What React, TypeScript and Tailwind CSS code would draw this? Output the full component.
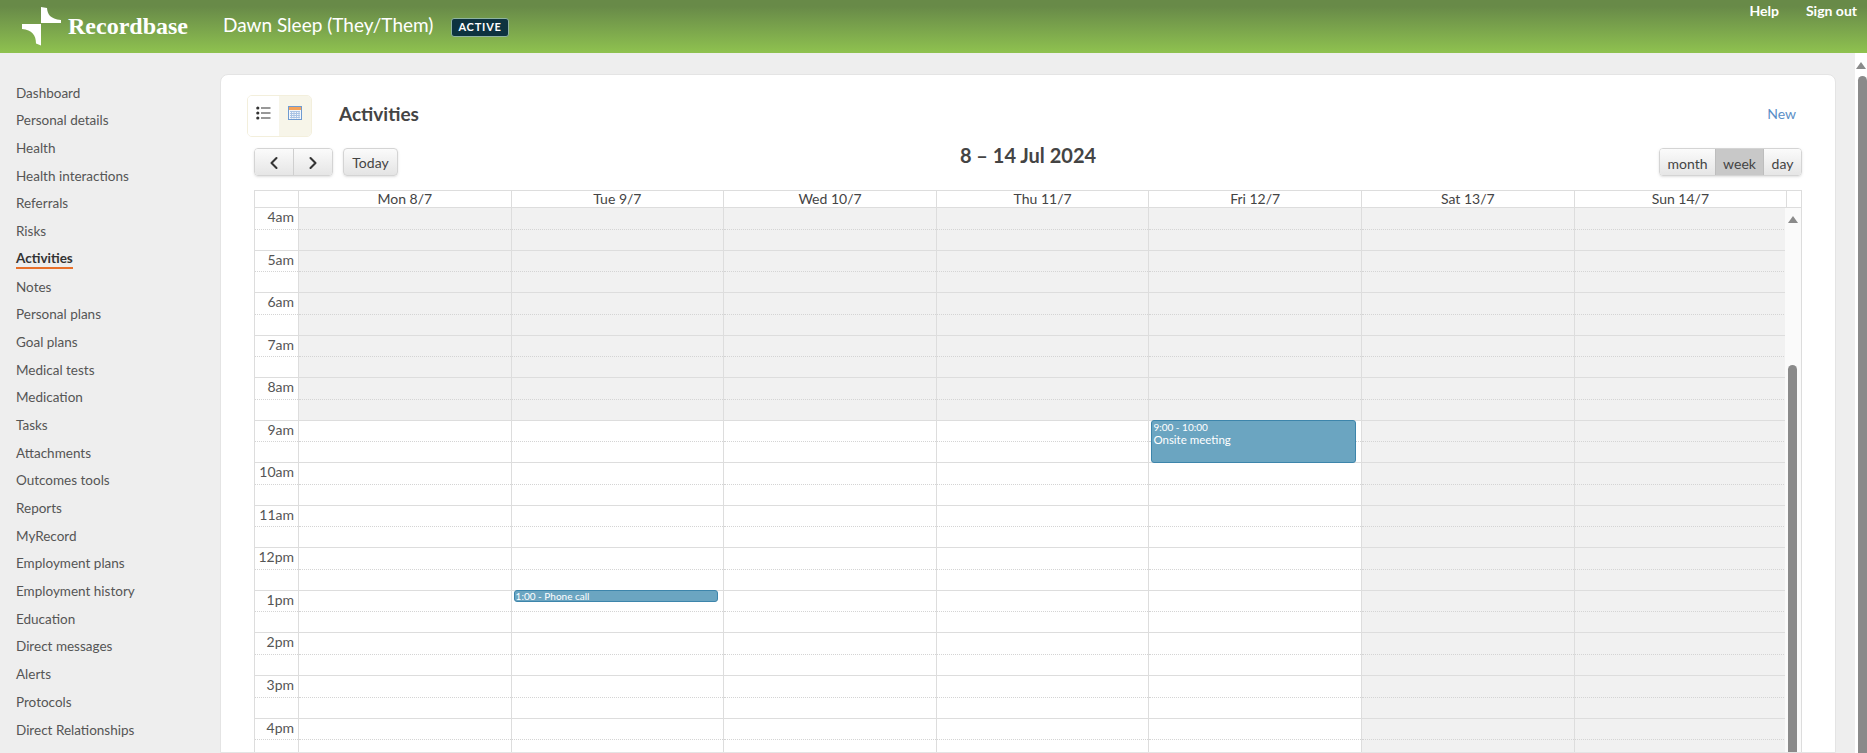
import React from 'react';
import { ChevronLeft, ChevronRight } from 'lucide-react';

const NAV_ITEMS = [
  'Dashboard', 'Personal details', 'Health', 'Health interactions', 'Referrals', 'Risks',
  'Activities', 'Notes', 'Personal plans', 'Goal plans', 'Medical tests', 'Medication',
  'Tasks', 'Attachments', 'Outcomes tools', 'Reports', 'MyRecord', 'Employment plans',
  'Employment history', 'Education', 'Direct messages', 'Alerts', 'Protocols', 'Direct Relationships',
];

const DAYS = ['Mon 8/7', 'Tue 9/7', 'Wed 10/7', 'Thu 11/7', 'Fri 12/7', 'Sat 13/7', 'Sun 14/7'];
const HOURS = ['4am', '5am', '6am', '7am', '8am', '9am', '10am', '11am', '12pm', '1pm', '2pm', '3pm', '4pm'];

const Logo = () => (
  <svg width="39" height="39" viewBox="0 0 39 39" className="shrink-0" fill="#fff">
    <path d="M19 0 L25 1 C25.500 7 28 12 39 13 L39 16 L19 16 Z" />
    <path d="M0 17 L19 17 L19 38.500 L14 36.500 C14 28 10 23 0 22 Z" />
  </svg>
);

const ListIcon = () => (
  <svg width="15" height="14" viewBox="0 0 15 14" fill="#333">
    <circle cx="1.800" cy="2" r="1.600" />
    <circle cx="1.800" cy="7" r="1.600" />
    <circle cx="1.800" cy="12" r="1.600" />
    <rect x="5" y="1.500" width="9.500" height="1" />
    <rect x="5" y="6.500" width="9.500" height="1" />
    <rect x="5" y="11.500" width="9.500" height="1" />
  </svg>
);

const CalendarIcon = () => (
  <svg width="14" height="14" viewBox="0 0 14 14">
    <rect x="0.500" y="0.500" width="13" height="13" fill="#f4f7fb" stroke="#6f9bd1" />
    <rect x="1" y="1" width="12" height="3" fill="#f5a35c" />
    <path d="M2 5.500 H12 M2 7.500 H12 M2 9.500 H12 M2 11.500 H12 M3.500 5 V12.500 M6 5 V12.500 M8.500 5 V12.500 M11 5 V12.500" stroke="#a9c3e4" strokeWidth="1" />
  </svg>
);

const btn = 'flex items-center justify-center h-[28px] bg-gradient-to-b from-[#fbfbfb] to-[#e4e4e4] text-[14px] text-[#444]';

const Sidebar = () => (
  <nav className="w-[220px] shrink-0 pt-[26px] pl-4 flex flex-col">
    {NAV_ITEMS.map(item => (
      <div key={item} className="h-[27.700px] flex items-center text-[13.500px] text-[#555]">
        {item === 'Activities' ? (
          <span className="font-bold text-[#333] border-b-2 border-[#e8702a] leading-[17px] mt-[1px]">{item}</span>
        ) : item}
      </div>
    ))}
  </nav>
);

const Toolbar = () => (
  <div className="grid grid-cols-3 items-start px-[33px] mt-[11px]">
    <div className="flex gap-[10px]">
      <div className="flex h-[28px] rounded-[4px] border border-[#d4d4d4] shadow-sm overflow-hidden">
        <div className={`${btn} w-[39px] border-r border-[#cfcfcf]`}>
          <ChevronLeft size={20} strokeWidth={2.500} color="#333" />
        </div>
        <div className={`${btn} w-[38px]`}>
          <ChevronRight size={20} strokeWidth={2.500} color="#333" />
        </div>
      </div>
      <div className={`${btn} w-[55px] rounded-[4px] border border-[#d4d4d4] shadow-sm`}>Today</div>
    </div>
    <div className="text-center text-[20px] font-bold text-[#444] leading-[24px] -mt-[5px]">8 – 14 Jul 2024</div>
    <div className="flex justify-end">
      <div className="flex h-[28px] rounded-[4px] border border-[#d4d4d4] shadow-sm overflow-hidden">
        <div className={`${btn} w-[55px]`}>month</div>
        <div className="flex items-center justify-center h-[28px] w-[49px] bg-[#c8c8c8] border-x border-[#bdbdbd] text-[14px] text-[#444]">week</div>
        <div className={`${btn} w-[37px]`}>day</div>
      </div>
    </div>
  </div>
);

const CalendarGrid = () => (
  <div className="mx-[33px] mt-[14px] flex-1 min-h-0 flex flex-col border-x border-t border-[#ddd] text-[14px] overflow-hidden">
    <div className="flex h-[16px] shrink-0 border-b border-[#ddd] box-content text-[#444] leading-[16px]">
      <div className="w-[44px] shrink-0 border-r border-[#ddd]" />
      {DAYS.map(d => (
        <div key={d} className="w-[212.600px] shrink-0 border-r border-[#ddd] text-center">{d}</div>
      ))}
    </div>
    <div className="relative flex-1 min-h-0 overflow-hidden">
      {HOURS.map((h, i) => (
        <div key={h} className="flex h-[42.550px] border-b border-[#ddd]">
          <div className="w-[44px] shrink-0 border-r border-[#ddd] relative">
            <div className="h-[21.500px] leading-[18px] text-right pr-[4px] text-[#555] border-b border-dotted border-[#d4d4d4]">{h}</div>
          </div>
          {DAYS.map((d, j) => {
            const closed = i < 5 || j > 4;
            return (
              <div
                key={d}
                className={`relative w-[212.600px] shrink-0 border-r border-[#ddd] ${closed ? 'bg-[#f1f1f1]' : 'bg-white'}`}
              >
                <div className="h-[21.500px] border-b border-dotted border-[#d4d4d4]" />
                {h === '9am' && j === 4 && (
                  <div className="absolute z-10 left-[2px] right-[5px] top-[-1px] h-[43px] rounded-[3px] bg-[#6ba5c1] border border-[#3d85ab] text-white pl-[1px] overflow-hidden">
                    <div className="text-[10px] leading-[12px]">9:00 - 10:00</div>
                    <div className="text-[11.500px] leading-[14px]">Onsite meeting</div>
                  </div>
                )}
                {h === '1pm' && j === 1 && (
                  <div className="absolute z-10 left-[2px] right-[5px] top-[-1px] h-[12px] rounded-[3px] bg-[#6ba5c1] border border-[#3d85ab] text-white pl-[1px] text-[10px] leading-[10px] overflow-hidden">
                    1:00 - Phone call
                  </div>
                )}
              </div>
            );
          })}
        </div>
      ))}
      {/* inner scrollbar */}
      <div className="absolute z-20 top-0 bottom-0 right-0 w-[16px] bg-[#fafafa]">
        <div className="absolute top-[8px] left-[3px] w-0 h-0 border-x-[5px] border-x-transparent border-b-[7px] border-b-[#8a8a8a]" />
        <div className="absolute top-[157px] bottom-0 left-[3px] w-[9px] rounded-t-[5px] bg-[#8a8a8a]" />
      </div>
    </div>
  </div>
);

export default function App() {
  return (
    <div className="h-screen w-full flex flex-col overflow-hidden bg-[#eeeeee] font-['Lato','Open_Sans',sans-serif]">
      <header className="h-[53px] shrink-0 flex items-start bg-gradient-to-b from-[#688a48] from-[12%] to-[#8fc24f] text-white">
        <div className="ml-[22px] mt-[7px]"><Logo /></div>
        <div className="ml-[7px] mt-[11px] text-[24px] leading-[30px] font-bold font-['Liberation_Serif',serif]">Recordbase</div>
        <div className="ml-[35px] mt-[13px] text-[19px] leading-[24px]">Dawn Sleep (They/Them)</div>
        <div className="ml-[18px] mt-[18px] h-[19px] px-[6px] flex items-center rounded-[3px] bg-[#0d3340] border border-[#8fb3a0] text-[11px] font-bold tracking-[0.8px]">ACTIVE</div>
        <div className="ml-auto mr-[10px] flex gap-[27px] text-[14px] font-bold leading-[22px]">
          <span>Help</span>
          <span>Sign out</span>
        </div>
      </header>
      <div className="flex-1 min-h-0 flex">
        <Sidebar />
        <main className="w-[1616px] shrink-0 mt-[21px] flex flex-col bg-white border border-[#e4e4e4] rounded-t-[8px] min-h-0">
          <div className="flex items-center h-[42px] mt-[20px] pl-[26px] pr-[39px] shrink-0">
            <div className="flex h-[42px] rounded-[5px] border border-[#f3efdc] overflow-hidden">
              <div className="w-[31px] flex items-start justify-center pt-[10px] bg-white"><ListIcon /></div>
              <div className="w-[32px] flex items-start justify-center pt-[10px] bg-[#f7f5e9]"><CalendarIcon /></div>
            </div>
            <h1 className="ml-[27px] -mt-[4px] text-[19px] font-bold text-[#444]">Activities</h1>
            <a className="ml-auto -mt-[6px] text-[14px] text-[#5b8fc7]">New</a>
          </div>
          <Toolbar />
          <CalendarGrid />
        </main>
        <div className="relative ml-auto w-[12px] shrink-0 bg-white">
          <div className="absolute top-[9px] left-[1px] w-0 h-0 border-x-[5px] border-x-transparent border-b-[7px] border-b-[#8a8a8a]" />
          <div className="absolute top-[23px] bottom-0 left-[3px] right-0 rounded-t-[5px] bg-[#8a8a8a]" />
        </div>
      </div>
    </div>
  );
}
